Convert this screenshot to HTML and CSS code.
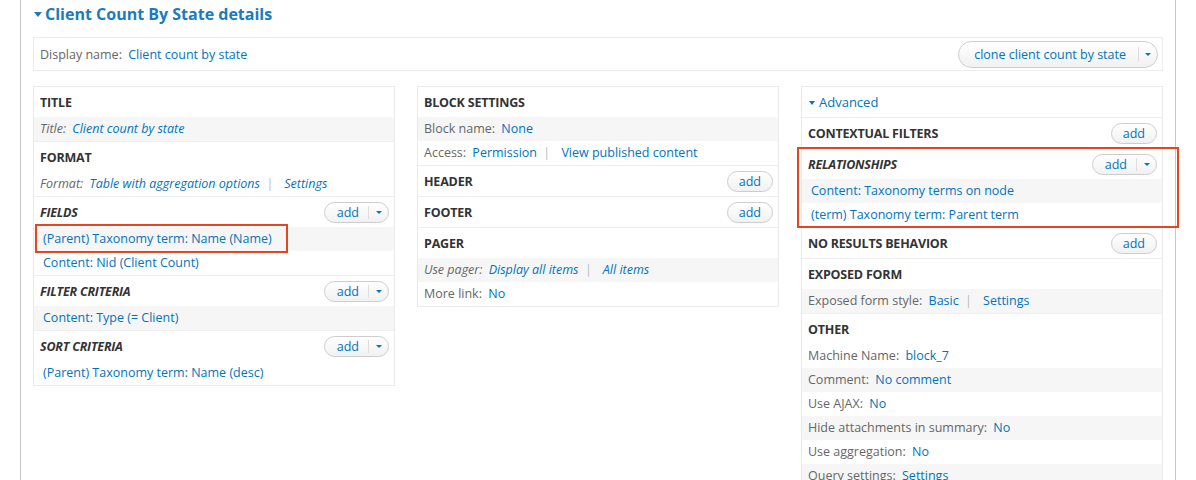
FILE: index.html
```html
<!DOCTYPE html>
<html lang="en">
<head>
    <meta charset="UTF-8">
    <title>Client Count By State details</title>
    <link rel="stylesheet" href="styles.css">
</head>
<body>
<div class="page">
    <!-- Display details heading -->
    <h2 class="details-title"><span class="tri tri-title"></span>Client Count By State details</h2>

    <!-- Display name bar -->
    <div class="display-bar">
        <div class="display-name"><span class="label">Display name:</span> <a href="#">Client count by state</a></div>
        <div class="pill clone-btn">
            <a href="#" class="pill-main">clone client count by state</a>
            <span class="pill-drop"><span class="tri"></span></span>
        </div>
    </div>

    <div class="columns">
        <!-- First column -->
        <div class="column">
            <div class="section">
                <div class="section-head"><h3>Title</h3></div>
                <div class="setting odd italic"><span class="label">Title:</span> <a href="#">Client count by state</a></div>
            </div>
            <div class="section">
                <div class="section-head"><h3>Format</h3></div>
                <div class="setting italic"><span class="label">Format:</span> <a href="#">Table with aggregation options</a> <span class="sep">|</span> <a href="#">Settings</a></div>
            </div>
            <div class="section">
                <div class="section-head">
                    <h3 class="italic">Fields</h3>
                    <div class="pill add-btn"><a href="#" class="pill-main">add</a><span class="pill-drop"><span class="tri"></span></span></div>
                </div>
                <div class="item odd marked"><a href="#">(Parent) Taxonomy term: Name (Name)</a><span class="annot annot-field"></span></div>
                <div class="item"><a href="#">Content: Nid (Client Count)</a></div>
            </div>
            <div class="section">
                <div class="section-head">
                    <h3 class="italic">Filter criteria</h3>
                    <div class="pill add-btn"><a href="#" class="pill-main">add</a><span class="pill-drop"><span class="tri"></span></span></div>
                </div>
                <div class="item odd"><a href="#">Content: Type (= Client)</a></div>
            </div>
            <div class="section">
                <div class="section-head">
                    <h3 class="italic">Sort criteria</h3>
                    <div class="pill add-btn"><a href="#" class="pill-main">add</a><span class="pill-drop"><span class="tri"></span></span></div>
                </div>
                <div class="item"><a href="#">(Parent) Taxonomy term: Name (desc)</a></div>
            </div>
        </div>

        <!-- Second column -->
        <div class="column">
            <div class="section">
                <div class="section-head"><h3>Block settings</h3></div>
                <div class="setting odd"><span class="label">Block name:</span> <a href="#">None</a></div>
                <div class="setting"><span class="label">Access:</span> <a href="#">Permission</a> <span class="sep">|</span> <a href="#">View published content</a></div>
            </div>
            <div class="section">
                <div class="section-head">
                    <h3>Header</h3>
                    <div class="pill add-btn"><a href="#" class="pill-main solo">add</a></div>
                </div>
            </div>
            <div class="section">
                <div class="section-head">
                    <h3>Footer</h3>
                    <div class="pill add-btn"><a href="#" class="pill-main solo">add</a></div>
                </div>
            </div>
            <div class="section">
                <div class="section-head"><h3>Pager</h3></div>
                <div class="setting odd italic"><span class="label">Use pager:</span> <a href="#">Display all items</a> <span class="sep">|</span> <a href="#">All items</a></div>
                <div class="setting"><span class="label">More link:</span> <a href="#">No</a></div>
            </div>
        </div>

        <!-- Third column -->
        <div class="column">
            <div class="section">
                <div class="advanced"><a href="#"><span class="tri tri-adv"></span>Advanced</a></div>
            </div>
            <div class="section">
                <div class="section-head">
                    <h3>Contextual filters</h3>
                    <div class="pill add-btn"><a href="#" class="pill-main solo">add</a></div>
                </div>
            </div>
            <div class="section marked">
                <div class="section-head">
                    <h3 class="italic">Relationships</h3>
                    <div class="pill add-btn"><a href="#" class="pill-main">add</a><span class="pill-drop"><span class="tri"></span></span></div>
                </div>
                <div class="item odd"><a href="#">Content: Taxonomy terms on node</a></div>
                <div class="item"><a href="#">(term) Taxonomy term: Parent term</a></div>
                <span class="annot annot-rel"></span>
            </div>
            <div class="section">
                <div class="section-head">
                    <h3>No results behavior</h3>
                    <div class="pill add-btn"><a href="#" class="pill-main solo">add</a></div>
                </div>
            </div>
            <div class="section">
                <div class="section-head"><h3>Exposed form</h3></div>
                <div class="setting odd"><span class="label">Exposed form style:</span> <a href="#">Basic</a> <span class="sep">|</span> <a href="#">Settings</a></div>
            </div>
            <div class="section">
                <div class="section-head"><h3>Other</h3></div>
                <div class="setting"><span class="label">Machine Name:</span> <a href="#">block_7</a></div>
                <div class="setting odd"><span class="label">Comment:</span> <a href="#">No comment</a></div>
                <div class="setting"><span class="label">Use AJAX:</span> <a href="#">No</a></div>
                <div class="setting odd"><span class="label">Hide attachments in summary:</span> <a href="#">No</a></div>
                <div class="setting"><span class="label">Use aggregation:</span> <a href="#">No</a></div>
                <div class="setting odd"><span class="label">Query settings:</span> <a href="#">Settings</a></div>
            </div>
        </div>
    </div>
</div>
</body>
</html>
```

FILE: styles.css
```css
body {
    margin: 0;
    font-family: "Open Sans", "Noto Sans", sans-serif;
    font-size: 12.5px;
    color: #333;
    background-color: #fff;
}

a {
    color: #0074bd;
    text-decoration: none;
}

/* Outer fieldset */
.page {
    margin-left: 20px;
    width: 1130px;
    min-height: 480px;
    padding: 0 12px;
    border-left: 1px solid #c8c8c8;
    border-right: 1px solid #c8c8c8;
}

.details-title {
    margin: 0;
    padding-top: 4px;
    line-height: 20px;
    font-size: 16px;
    font-weight: bold;
    color: #1a7bbf;
}

/* Small blue triangles */
.tri {
    display: inline-block;
    width: 0;
    height: 0;
    border-left: 4px solid transparent;
    border-right: 4px solid transparent;
    border-top: 4px solid #0074bd;
    vertical-align: middle;
}

.tri-title {
    margin: 0 3px 3px 1px;
    border-left-width: 4.5px;
    border-right-width: 4.5px;
    border-top-width: 5px;
    border-top-color: #1a7bbf;
}

.tri-adv {
    margin: 0 4px 2px 1px;
    border-left-width: 3.5px;
    border-right-width: 3.5px;
}

/* Display name bar */
.display-bar {
    margin-top: 13px;
    height: 34px;
    box-sizing: border-box;
    border: 1px solid #ececec;
    padding: 0 4px 0 6px;
    display: flex;
    align-items: center;
    justify-content: space-between;
}

.label {
    color: #666;
    margin-right: 3px;
}

.sep {
    color: #bbb;
    margin: 0 8px 0 3px;
}

/* Pill buttons */
.pill {
    display: flex;
    align-items: center;
    box-sizing: border-box;
    border: 1px solid #cdcdcd;
    background: linear-gradient(#ffffff, #f1f1f1);
}

.pill-drop {
    display: flex;
    align-items: center;
    justify-content: center;
    border-left: 1px solid #dedede;
}

.clone-btn {
    height: 27px;
    border-radius: 14px;
}

.clone-btn .pill-main {
    padding: 0 12px 0 15px;
}

.clone-btn .pill-drop {
    width: 18px;
    height: 15px;
}

.clone-btn .tri {
    border-width: 3px 3px 0 3px;
}

.add-btn {
    height: 21px;
    border-radius: 11px;
}

.add-btn .pill-main {
    padding: 0 9px 0 12px;
}

.add-btn .pill-main.solo {
    padding: 0 11px;
}

.add-btn .pill-drop {
    width: 19px;
    height: 13px;
}

.add-btn .tri {
    border-width: 3.5px 3.5px 0 3.5px;
}

/* Three columns */
.columns {
    margin-top: 15px;
    display: grid;
    grid-template-columns: repeat(3, 1fr);
    gap: 22px;
    align-items: start;
}

.column {
    border: 1px solid #ebebeb;
    background-color: #fff;
}

.section {
    border-bottom: 1px solid #f0f0f0;
}

.section:last-child {
    border-bottom: none;
}

.section-head {
    height: 30px;
    padding: 0 5px 0 6px;
    display: flex;
    align-items: center;
    justify-content: space-between;
}

.section-head h3 {
    margin: 0;
    font-size: 12.5px;
    font-weight: bold;
    text-transform: uppercase;
    letter-spacing: -0.2px;
    color: #333;
}

.italic {
    font-style: italic;
}

.setting,
.item {
    height: 24px;
    line-height: 24px;
    padding: 0 6px;
    white-space: nowrap;
}

.item {
    padding-left: 9px;
}

.odd {
    background-color: #f6f6f6;
}

.advanced {
    height: 30px;
    line-height: 30px;
    padding: 0 6px;
    font-size: 13px;
}

/* Red annotation boxes */
.marked {
    position: relative;
}

.annot {
    position: absolute;
    box-sizing: border-box;
    border: 2px solid #e6461f;
    pointer-events: none;
}

.annot-field {
    left: 1px;
    top: -3px;
    width: 253px;
    height: 29px;
}

.annot-rel {
    left: -5px;
    top: -2px;
    width: 382px;
    height: 81px;
}
```
